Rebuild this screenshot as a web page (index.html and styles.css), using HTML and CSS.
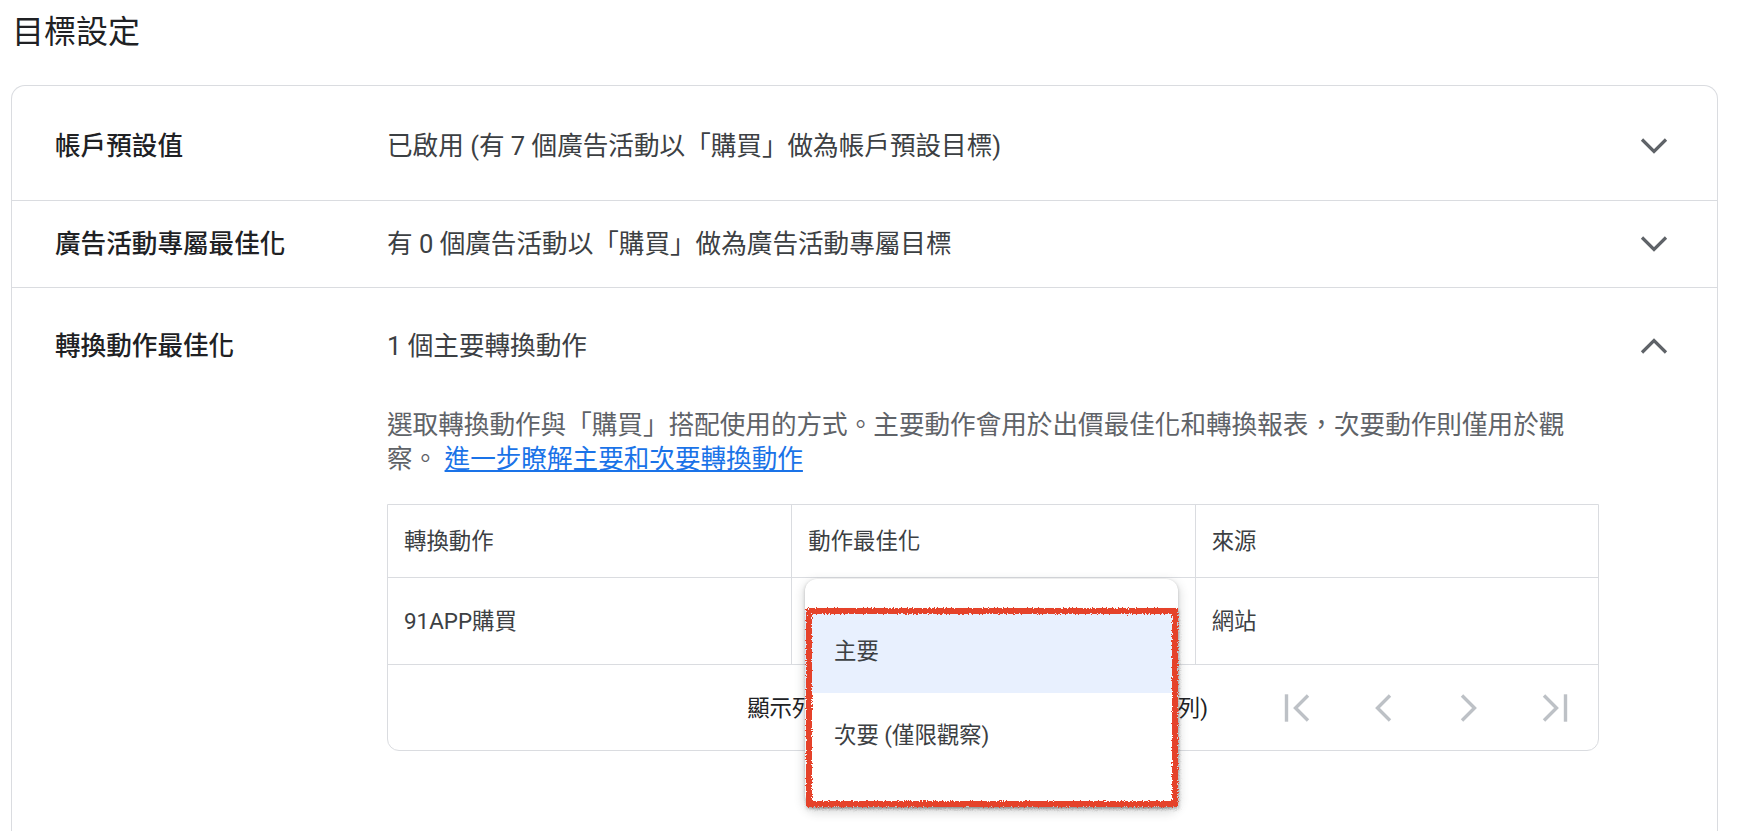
FILE: index.html
```html
<!DOCTYPE html>
<html lang="zh-Hant">

<head>
    <meta charset="UTF-8">
    <meta name="viewport" content="width=device-width, initial-scale=1.0">
    <title>目標設定</title>
    <link rel="stylesheet" href="styles.css">
</head>

<body>
    <svg class="defs" aria-hidden="true">
        <filter id="rough" x="-5%" y="-5%" width="110%" height="110%">
            <feTurbulence type="fractalNoise" baseFrequency="0.8" numOctaves="2" result="noise" />
            <feDisplacementMap in="SourceGraphic" in2="noise" scale="4" />
        </filter>
    </svg>

    <div class="page">
        <h1 class="page-title">目標設定</h1>

        <div class="card">
            <div class="setting setting-first">
                <div class="setting-label">帳戶預設值</div>
                <div class="setting-value">已啟用 (有 7 個廣告活動以「購買」做為帳戶預設目標)</div>
                <svg class="chevron" viewBox="0 0 32 32"><path d="M4 9.5L16 21.5L28 9.5" /></svg>
            </div>

            <div class="setting">
                <div class="setting-label">廣告活動專屬最佳化</div>
                <div class="setting-value">有 0 個廣告活動以「購買」做為廣告活動專屬目標</div>
                <svg class="chevron" viewBox="0 0 32 32"><path d="M4 9.5L16 21.5L28 9.5" /></svg>
            </div>

            <div class="setting setting-open">
                <div class="setting-label">轉換動作最佳化</div>
                <div class="setting-value">1 個主要轉換動作</div>
                <svg class="chevron" viewBox="0 0 32 32"><path d="M4 22.5L16 10.5L28 22.5" /></svg>

                <div class="setting-detail">
                    <p class="detail-text"><span>選取轉換動作與「購買」搭配使用的方式。主要動作會用於出價最佳化和轉換報表，次要動作則僅用於觀</span><span>察。</span> <a href="#">進一步瞭解主要和次要轉換動作</a></p>

                    <div class="action-table">
                        <div class="table-row table-head">
                            <div class="cell">轉換動作</div>
                            <div class="cell">動作最佳化</div>
                            <div class="cell">來源</div>
                        </div>
                        <div class="table-row">
                            <div class="cell">91APP購買</div>
                            <div class="cell">主要</div>
                            <div class="cell">網站</div>
                        </div>
                        <div class="table-foot">
                            <span class="foot-label">顯示列數：</span>
                            <span class="rows-select">10</span>
                            <span class="foot-range">1 - 1 列 (共 1 列)</span>
                            <div class="pager">
                                <span class="pager-btn">
                                    <svg viewBox="0 0 32 32"><path d="M5.5 2.3V29.7" /><path d="M27 3.5L14.5 16L27 28.5" /></svg>
                                </span>
                                <span class="pager-btn">
                                    <svg viewBox="0 0 32 32"><path d="M23 3.5L10.5 16L23 28.5" /></svg>
                                </span>
                                <span class="pager-btn">
                                    <svg viewBox="0 0 32 32"><path d="M9 3.5L21.5 16L9 28.5" /></svg>
                                </span>
                                <span class="pager-btn">
                                    <svg viewBox="0 0 32 32"><path d="M26.5 2.3V29.7" /><path d="M5 3.5L17.5 16L5 28.5" /></svg>
                                </span>
                            </div>
                        </div>

                        <div class="menu">
                            <div class="menu-item selected">主要</div>
                            <div class="menu-item">次要 (僅限觀察)</div>
                            <div class="menu-mark"></div>
                        </div>
                    </div>
                </div>
            </div>
        </div>
    </div>
</body>

</html>
```

FILE: styles.css
```css
* {
    margin: 0;
    padding: 0;
    box-sizing: border-box;
}

body {
    font-family: Roboto, "Noto Sans CJK TC", sans-serif;
    color: #3c4043;
    background-color: #fff;
}

.defs {
    position: absolute;
    width: 0;
    height: 0;
}

.page {
    padding: 12px 22px 0 11px;
}

.page-title {
    font-size: 32px;
    line-height: 40px;
    font-weight: 400;
    color: #202124;
    padding-left: 1px;
}

.card {
    margin-top: 33px;
    border: 1px solid #dadce0;
    border-bottom: 0;
    border-radius: 14px 14px 0 0;
}

.setting {
    display: grid;
    grid-template-columns: 332px 1fr 32px;
    align-items: center;
    padding: 25px 47px 25px 43px;
    border-bottom: 1px solid #dadce0;
    font-size: 25.6px;
    line-height: 36px;
}

.setting-first {
    padding-top: 42px;
    padding-bottom: 36px;
}

.setting-open {
    padding-top: 40px;
    padding-bottom: 80px;
    border-bottom: 0;
}

.setting-label {
    font-weight: 500;
    color: #202124;
}

.setting-value {
    color: #3c4043;
}

.chevron {
    width: 32px;
    height: 32px;
    fill: none;
    stroke: #5f6368;
    stroke-width: 3.2;
}

.setting-detail {
    grid-column: 2 / 3;
    max-width: 1212px;
    margin-top: 44px;
}

.detail-text {
    font-size: 25.6px;
    line-height: 34px;
    color: #5f6368;
}

.detail-text a {
    color: #1a73e8;
}

.action-table {
    position: relative;
    margin-top: 28px;
    border: 1px solid #dadce0;
    border-radius: 0 0 12px 12px;
    font-size: 22.4px;
    line-height: 32px;
}

.table-row {
    display: grid;
    grid-template-columns: repeat(3, 1fr);
    border-bottom: 1px solid #dadce0;
}

.cell {
    padding: 27px 16px;
    border-left: 1px solid #dadce0;
    color: #3c4043;
}

.cell:first-child {
    border-left: 0;
}

.table-head .cell {
    padding: 20px 16px;
}

.table-foot {
    display: flex;
    align-items: center;
    justify-content: flex-end;
    height: 85px;
    padding-right: 15px;
    color: #202124;
}

.rows-select {
    width: 120px;
    margin-right: 69px;
}

.pager {
    display: flex;
    gap: 30px;
    margin-left: 61px;
}

.pager-btn {
    display: flex;
    justify-content: center;
    align-items: center;
    width: 56px;
    height: 32px;
}

.pager-btn svg {
    width: 32px;
    height: 32px;
    fill: none;
    stroke: #bdc1c6;
    stroke-width: 3.4;
}

.menu {
    position: absolute;
    left: 417px;
    top: 74px;
    width: 373px;
    padding: 30px 0;
    background-color: #fff;
    border-radius: 12px;
    box-shadow: 0 1px 3px rgba(60, 64, 67, .3), 0 4px 8px 3px rgba(60, 64, 67, .15);
    z-index: 2;
}

.menu-item {
    height: 84px;
    line-height: 84px;
    padding-left: 29px;
    color: #3c4043;
}

.menu-item.selected {
    background-color: #e8f0fe;
}

.menu-mark {
    position: absolute;
    left: 1px;
    right: 0;
    top: 29px;
    bottom: 0;
    border: 6px solid #e5432b;
    box-shadow: 1px 2px 3px rgba(0, 0, 0, .25);
    filter: url(#rough);
}
```
